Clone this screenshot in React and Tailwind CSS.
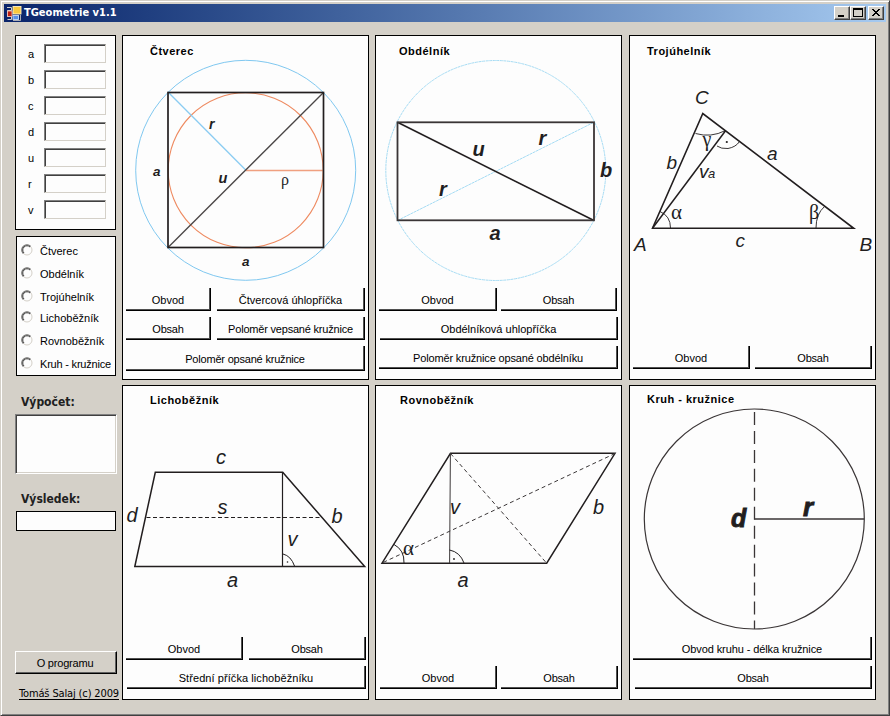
import React from "react";

const SANS = "font-['Liberation_Sans',Arial,sans-serif]";
const TAHOMA = "font-['DejaVu_Sans_Condensed','DejaVu_Sans',Tahoma,sans-serif]";

function Btn({ children, className = "" }) {
  return (
    <button
      className={`flex items-center justify-center whitespace-nowrap border-r border-b border-black bg-[#fdfdfd] pt-[2px] text-[11px] leading-none shadow-[inset_-1px_-1px_0_#505050] ${className}`}
    >
      {children}
    </button>
  );
}

function Panel({ title, titleClass, children, buttonsClass, buttons }) {
  return (
    <section className="flex w-[247px] shrink-0 flex-col border border-black bg-[#fdfdfd]">
      <h2 className={`shrink-0 whitespace-nowrap text-[11px] leading-[14px] font-bold tracking-[0.5px] ${titleClass}`}>{title}</h2>
      {children}
      <div className={`flex flex-col gap-[6px] ${buttonsClass}`}>{buttons}</div>
    </section>
  );
}

function Label({ x, y, size = 20, bold, greek, children, fill = "#221e1f" }) {
  return (
    <text
      x={x}
      y={y}
      fontSize={size}
      fill={fill}
      fontFamily={greek ? "Liberation Serif, serif" : "Liberation Sans, sans-serif"}
      fontStyle={greek ? "normal" : "italic"}
      fontWeight={bold ? 700 : 400}
    >
      {children}
    </text>
  );
}

function Square() {
  return (
    <svg className="block h-[226px] w-[245px] shrink-0" viewBox="123 58 245 226" fill="none">
      <circle cx="245.7" cy="170.3" r="110" stroke="#80c8f0" />
      <circle cx="245.7" cy="170.3" r="77.5" stroke="#ee8a60" strokeWidth="1.1" />
      <path d="M168 92L245.7 170" stroke="#8accf2" strokeWidth="1.3" />
      <path d="M245.7 170.5H323" stroke="#f0a080" strokeWidth="1.3" />
      <path d="M168 247.5L323.5 92.5" stroke="#4a4646" strokeWidth="1.3" />
      <rect x="168" y="92.5" width="155.5" height="155" stroke="#221e1f" strokeWidth="1.7" />
      <Label x={209} y={129} size={14} bold>r</Label>
      <Label x={153} y={175.5} size={13.5} bold>a</Label>
      <Label x={218.5} y={183} size={14.5} bold>u</Label>
      <Label x={242} y={265.5} size={13.5} bold>a</Label>
      <Label x={281} y={184.5} size={16} greek>ρ</Label>
    </svg>
  );
}

function Rectangle() {
  return (
    <svg className="block h-[226px] w-[245px] shrink-0" viewBox="376 58 245 226" fill="none">
      <circle cx="495.8" cy="170.5" r="110" stroke="#a6dcf4" strokeDasharray="3 0.6" />
      <path d="M397.5 220.5L594.5 122" stroke="#a6dcf4" strokeDasharray="3 0.6" />
      <path d="M397.5 122.3L594 220.5" stroke="#221e1f" strokeWidth="1.6" />
      <rect x="397.5" y="122.3" width="196.5" height="98" stroke="#3a3536" strokeWidth="1.8" />
      <Label x={472.5} y={156} bold>u</Label>
      <Label x={538.5} y={145} bold>r</Label>
      <Label x={439} y={196} bold>r</Label>
      <Label x={600} y={177} bold>b</Label>
      <Label x={489.5} y={239.5} bold>a</Label>
    </svg>
  );
}

function Triangle() {
  return (
    <svg className="block h-[284px] w-[245px] shrink-0" viewBox="630 58 245 284" fill="none" stroke="#221e1f">
      <path d="M652.5 228.3L702.8 113.5L853.7 228.3Z" strokeWidth="1.6" />
      <path d="M652.5 228.3L725.7 130.5" strokeWidth="1.5" />
      <path d="M695.5 133.5Q711 138 725.5 130.5M717 146Q721 149 728 148.5Q736 147 739.5 141.5M660 211.5Q670.5 216 670.5 228M824.5 206.5Q816 214 816 228" strokeWidth="0.9" />
      <circle cx="726.8" cy="142" r="1.1" fill="#221e1f" stroke="none" />
      <g stroke="none">
        <Label x={695} y={104} size={19}>C</Label>
        <Label x={634} y={251} size={19}>A</Label>
        <Label x={859.5} y={250.5} size={19}>B</Label>
        <Label x={767} y={159.5} size={19}>a</Label>
        <Label x={666.5} y={169} size={19}>b</Label>
        <Label x={735.5} y={247} size={19}>c</Label>
        <Label x={699} y={178} size={19}>v</Label>
        <Label x={708} y={178} size={13}>a</Label>
        <Label x={671} y={219} size={21} greek>α</Label>
        <Label x={809} y={219} size={20} greek>β</Label>
        <Label x={702.5} y={146} size={20} greek>γ</Label>
      </g>
    </svg>
  );
}

function Trapezoid() {
  return (
    <svg className="block h-[226px] w-[245px] shrink-0" viewBox="123 407 245 226" fill="none" stroke="#221e1f">
      <path d="M155.3 472.3H282.7L364.7 566.5H134.8Z" strokeWidth="1.5" />
      <path d="M282.5 472V566" strokeWidth="1.2" />
      <path d="M146.5 517.5H322" strokeDasharray="4 2.5" />
      <path d="M283 554Q291 556 294.5 566" />
      <circle cx="287.5" cy="562" r="0.8" fill="#221e1f" stroke="none" />
      <g stroke="none">
        <Label x={216} y={464}>c</Label>
        <Label x={126.5} y={522}>d</Label>
        <Label x={217.5} y={513.5}>s</Label>
        <Label x={331.5} y={523}>b</Label>
        <Label x={287.5} y={546}>v</Label>
        <Label x={227} y={587}>a</Label>
      </g>
    </svg>
  );
}

function Parallelogram() {
  return (
    <svg className="block h-[255px] w-[245px] shrink-0" viewBox="376 407 245 255" fill="none" stroke="#221e1f">
      <path d="M450.5 453.3H615L546.7 563.2H382Z" strokeWidth="1.5" />
      <path d="M450.4 453L449.6 563" stroke="#3c3839" />
      <path d="M450.5 453.5L546.5 563M615 453.5L382 563" stroke="#3c3839" strokeDasharray="4 3" />
      <path d="M394 544.5Q404.5 550 404 563M449.5 550Q460 552 464 563" />
      <circle cx="454" cy="559" r="0.9" fill="#221e1f" stroke="none" />
      <g stroke="none">
        <Label x={450} y={513.5}>v</Label>
        <Label x={593} y={513.5}>b</Label>
        <Label x={457.5} y={587}>a</Label>
        <Label x={403} y={555} size={21} greek>α</Label>
      </g>
    </svg>
  );
}

function Circle() {
  return (
    <svg className="block h-[226px] w-[245px] shrink-0" viewBox="630 407 245 226" fill="none" stroke="#3a3536">
      <circle cx="754.3" cy="519" r="110" strokeWidth="1.2" />
      <path d="M754.5 412V629" strokeWidth="1.3" strokeDasharray="13 5.95" />
      <path d="M754.5 519H864" strokeWidth="1.3" />
      <g stroke="#221e1f" strokeWidth="0.9">
        <Label x={731} y={527} size={25} bold>d</Label>
        <Label x={803} y={516} size={26} bold>r</Label>
      </g>
    </svg>
  );
}

function Radio({ label, className = "h-[23px]" }) {
  return (
    <label className={`flex shrink-0 items-center whitespace-nowrap text-[11px] leading-none ${className}`}>
      <svg className="mr-[7px] block h-3 w-3 shrink-0" viewBox="0 0 12 12" fill="none">
        <circle cx="6" cy="6" r="5" stroke="#d4d0c8" />
        <path d="M2.3 9.7A5.2 5.2 0 0 1 9.7 2.3" stroke="#707070" strokeWidth="1.1" />
        <path d="M3 9A4.2 4.2 0 0 1 9 3" stroke="#404040" />
      </svg>
      <span className="pt-[3px]">{label}</span>
    </label>
  );
}

function AppIcon() {
  return (
    <svg className="block h-[15px] w-[15px]" viewBox="0 0 15 15">
      <path d="M0 1H5V4H0ZM0 12H5V15H0ZM12 10H14V15H12Z" fill="#0a246a" />
      <path d="M0 1.5H4.500V4.500H0.500V10.500H4.500V13.500H0.500" fill="none" stroke="#d4d0c8" strokeWidth="1" />
      <rect x="0.500" y="5" width="4.500" height="5.500" fill="#c02010" stroke="#f0c8c0" strokeWidth="0.8" />
      <rect x="6" y="0.500" width="8" height="7.500" fill="#f8c840" stroke="#fff0c0" strokeWidth="0.9" />
      <rect x="6" y="9.500" width="5.500" height="4" fill="#5890e8" stroke="#c8dcf8" strokeWidth="0.9" />
      <path d="M13.500 9V14.500H6" fill="none" stroke="#d4d0c8" strokeWidth="0.800" />
    </svg>
  );
}

function WinButton({ children, className = "" }) {
  return (
    <button
      className={`h-[14px] w-4 border border-t-white border-l-white border-r-[#404040] border-b-[#404040] bg-[#d4d0c8] shadow-[inset_-1px_-1px_0_#808080] ${className}`}
    >
      <svg className="block h-3 w-[14px]" viewBox="0 0 14 12" fill="none" stroke="#000" shapeRendering="crispEdges">
        {children}
      </svg>
    </button>
  );
}

export default function App() {
  return (
    <div
      className={`flex h-[716px] w-[890px] flex-col overflow-hidden border border-t-[#d4d0c8] border-l-[#d4d0c8] border-r-[#404040] border-b-[#404040] bg-[#d4d0c8] px-[3px] pt-[3px] text-black shadow-[inset_1px_1px_0_#fff,inset_-1px_-1px_0_#808080] ${SANS}`}
    >
      <header className="mr-[-1px] flex h-[18px] w-[882px] shrink-0 items-center bg-linear-to-r from-[#0a246a] to-[#a6caf0] pr-[2px] pl-[3px]">
        <AppIcon />
        <h1 className={`ml-[2px] flex-1 text-[11px] leading-[18px] font-bold text-white ${TAHOMA}`}>TGeometrie v1.1</h1>
        <WinButton>
          <path d="M3 9H9" strokeWidth="2" />
        </WinButton>
        <WinButton>
          <path d="M2.500 1.500H11.500V9.500H2.500ZM2 2.500H12" />
        </WinButton>
        <WinButton className="ml-[2px]">
          <path d="M3.500 2L10.500 9M10.500 2L3.500 9" strokeWidth="1.7" />
        </WinButton>
      </header>

      <main className="flex pt-[13px] pl-[11px]">
        <aside className="flex h-[665px] w-[107px] shrink-0 flex-col">
          <div className="flex h-[195px] w-[101px] shrink-0 flex-col gap-[7px] border border-black bg-[#fdfdfd] pt-2 pl-3">
            {["a", "b", "c", "d", "u", "r", "v"].map((name) => (
              <label key={name} className="flex h-[19px] items-center text-[11px] leading-none">
                <span className="w-4 pt-[2px]">{name}</span>
                <input
                  aria-label={name}
                  className="h-[19px] w-[62px] border border-t-[#808080] border-l-[#808080] border-r-[#d4d0c8] border-b-[#d4d0c8] bg-[#fdfdfd] shadow-[inset_1px_1px_0_#404040]"
                />
              </label>
            ))}
          </div>
          <div className="mt-[6px] ml-px flex h-[140px] w-[100px] shrink-0 flex-col border border-black bg-[#fdfdfd] pt-px pl-1">
            <Radio label="Čtverec" />
            <Radio label="Obdélník" />
            <Radio label="Trojúhelník" />
            <Radio label="Lichoběžník" className="h-[20px]" />
            <Radio label="Rovnoběžník" className="h-[25px]" />
            <Radio label="Kruh - kružnice" className="h-[21px] tracking-[-0.2px]" />
          </div>
          <h3 className={`mt-[18px] ml-[6px] h-5 shrink-0 text-[12px] leading-[16px] font-bold text-[#202020] ${TAHOMA}`}>Výpočet:</h3>
          <div className="h-[60px] w-[102px] shrink-0 border border-t-[#808080] border-l-[#808080] border-r-white border-b-white bg-[#fdfdfd] shadow-[inset_1px_1px_0_#404040,inset_-1px_-1px_0_#d4d0c8]" />
          <h3 className={`mt-[17px] ml-[6px] h-5 shrink-0 text-[12px] leading-[16px] font-bold text-[#202020] ${TAHOMA}`}>Výsledek:</h3>
          <div className="ml-px h-5 w-[100px] shrink-0 border border-black bg-[#fdfdfd]" />
          <button className="mt-[120px] h-[23px] w-[102px] shrink-0 border border-t-white border-l-white border-r-black border-b-black bg-[#d4d0c8] pr-[2px] pt-px text-[11px] leading-none tracking-[-0.2px] shadow-[inset_-1px_-1px_0_#606060]">
            O programu
          </button>
          <a className={`mt-[13px] ml-1 h-[13px] w-[100px] shrink-0 whitespace-nowrap border-b border-black text-[11px] leading-[14px] tracking-[-0.14px] ${TAHOMA}`}>
            Tomáš Salaj (c) 2009
          </a>
        </aside>

        <div className="flex flex-col gap-[5px]">
          <div className="flex h-[345px]">
            <Panel
              title="Čtverec"
              titleClass="h-[22px] pt-2 pl-[27px]"
              buttonsClass="pt-1 pl-[3px]"
              buttons={
                <>
                  <div className="flex gap-[6px]">
                    <Btn className="h-[23px] w-[85px]">Obvod</Btn>
                    <Btn className="h-[23px] w-[148px]">Čtvercová úhlopříčka</Btn>
                  </div>
                  <div className="flex gap-[6px]">
                    <Btn className="h-[23px] w-[85px] tracking-[-0.2px]">Obsah</Btn>
                    <Btn className="h-[23px] w-[148px] tracking-[-0.2px]">Poloměr vepsané kružnice</Btn>
                  </div>
                  <Btn className="h-[25px] w-[239px] tracking-[-0.2px]">Poloměr opsané kružnice</Btn>
                </>
              }
            >
              <Square />
            </Panel>
            <div className="w-[6px]" />
            <Panel
              title="Obdélník"
              titleClass="h-[22px] pt-2 pl-[23px]"
              buttonsClass="pt-1 pl-[3px]"
              buttons={
                <>
                  <div className="flex gap-1">
                    <Btn className="h-[23px] w-[118px]">Obvod</Btn>
                    <Btn className="h-[23px] w-[116px] tracking-[-0.2px]">Obsah</Btn>
                  </div>
                  <Btn className="ml-px h-[23px] w-[238px]">Obdélníková uhlopříčka</Btn>
                  <Btn className="h-[23px] w-[239px] tracking-[-0.15px]">Poloměr kružnice opsané obdélníku</Btn>
                </>
              }
            >
              <Rectangle />
            </Panel>
            <div className="w-[7px]" />
            <Panel
              title="Trojúhelník"
              titleClass="h-[22px] pt-2 pl-[17px]"
              buttonsClass="pt-1 pl-[3px]"
              buttons={
                <div className="flex gap-[5px]">
                  <Btn className="h-[23px] w-[117px]">Obvod</Btn>
                  <Btn className="h-[23px] w-[117px] tracking-[-0.2px]">Obsah</Btn>
                </div>
              }
            >
              <Triangle />
            </Panel>
          </div>

          <div className="flex h-[315px]">
            <Panel
              title="Lichoběžník"
              titleClass="h-[21px] pt-[7px] pl-[27px]"
              buttonsClass="pt-1 pl-[3px]"
              buttons={
                <>
                  <div className="flex gap-[6px]">
                    <Btn className="h-[23px] w-[117px]">Obvod</Btn>
                    <Btn className="h-[23px] w-[117px] tracking-[-0.2px]">Obsah</Btn>
                  </div>
                  <Btn className="ml-px h-[23px] w-[239px] tracking-[0.07px]">Střední příčka lichoběžníku</Btn>
                </>
              }
            >
              <Trapezoid />
            </Panel>
            <div className="w-[6px]" />
            <Panel
              title="Rovnoběžník"
              titleClass="h-[21px] pt-[7px] pl-[24px]"
              buttonsClass="pt-1 pl-1"
              buttons={
                <div className="flex gap-1">
                  <Btn className="h-[23px] w-[117px]">Obvod</Btn>
                  <Btn className="h-[23px] w-[117px] tracking-[-0.2px]">Obsah</Btn>
                </div>
              }
            >
              <Parallelogram />
            </Panel>
            <div className="w-[7px]" />
            <Panel
              title="Kruh - kružnice"
              titleClass="h-[21px] pt-[6px] pl-[17px]"
              buttonsClass="pt-1 pl-[3px]"
              buttons={
                <>
                  <Btn className="h-[23px] w-[239px] tracking-[-0.1px]">Obvod kruhu - délka kružnice</Btn>
                  <Btn className="ml-[2px] h-[23px] w-[237px] tracking-[-0.2px]">Obsah</Btn>
                </>
              }
            >
              <Circle />
            </Panel>
          </div>
        </div>
      </main>
    </div>
  );
}
